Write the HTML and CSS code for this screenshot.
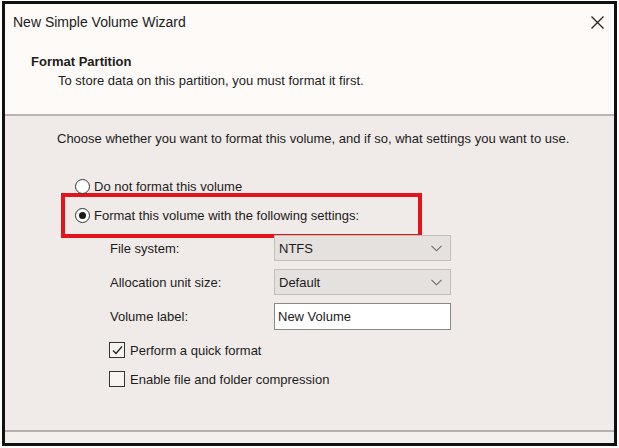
FILE: index.html
```html
<!DOCTYPE html>
<html lang="en">
<head>
  <meta charset="UTF-8">
  <title>New Simple Volume Wizard</title>
  <link rel="stylesheet" href="styles.css">
</head>
<body>
  <div class="window">
    <header class="head">
      <div class="title-row">
        <span class="title">New Simple Volume Wizard</span>
        <svg class="close" width="13" height="13" viewBox="0 0 13 13">
          <path d="M0.5 0.5 L12.5 12.5 M12.5 0.5 L0.5 12.5" stroke="#222" stroke-width="1.3" fill="none"/>
        </svg>
      </div>
      <div class="step">Format Partition</div>
      <div class="step-sub">To store data on this partition, you must format it first.</div>
    </header>

    <main class="body">
      <p class="intro">Choose whether you want to format this volume, and if so, what settings you want to use.</p>

      <div class="radio-row first">
        <span class="radio"></span>
        <span>Do not format this volume</span>
      </div>
      <div class="highlight">
        <div class="radio-row">
          <span class="radio on"></span>
          <span>Format this volume with the following settings:</span>
        </div>
      </div>

      <div class="fields">
        <div class="field">
          <span class="label">File system:</span>
          <div class="combo">
            <span>NTFS</span>
            <svg width="11" height="7" viewBox="0 0 11 7"><path d="M0.5 0.8 L5.5 5.8 L10.5 0.8" stroke="#6d6d6d" stroke-width="1.1" fill="none"/></svg>
          </div>
        </div>
        <div class="field">
          <span class="label">Allocation unit size:</span>
          <div class="combo">
            <span>Default</span>
            <svg width="11" height="7" viewBox="0 0 11 7"><path d="M0.5 0.8 L5.5 5.8 L10.5 0.8" stroke="#6d6d6d" stroke-width="1.1" fill="none"/></svg>
          </div>
        </div>
        <div class="field">
          <span class="label">Volume label:</span>
          <div class="textbox">New Volume</div>
        </div>
      </div>

      <div class="check-row first">
        <span class="check">
          <svg width="13" height="13" viewBox="0 0 13 13"><path d="M2 6.5 L5 9.5 L11 2.5" stroke="#222" stroke-width="1.3" fill="none"/></svg>
        </span>
        <span>Perform a quick format</span>
      </div>
      <div class="check-row">
        <span class="check"></span>
        <span>Enable file and folder compression</span>
      </div>
    </main>

    <footer class="foot"></footer>
  </div>
</body>
</html>
```

FILE: styles.css
```css
body {
  margin: 0;
  background: #fff;
  font-family: 'Liberation Sans', Arial, sans-serif;
  font-size: 13px;
  color: #1c1c1c;
}
.window {
  margin: 1px 2px 0 2px;
  width: 609px;
  height: 439px;
  border: 3px solid #111;
  display: flex;
  flex-direction: column;
  background: #f0ebe8;
}
.head {
  height: 112px;
  background: #fefaf8;
  border-bottom: 2px solid #b8b4b1;
  box-sizing: border-box;
}
.title-row {
  display: flex;
  justify-content: space-between;
  align-items: center;
  padding: 10px 10px 0 8px;
}
.title {
  font-size: 14px;
}
.step {
  font-weight: bold;
  margin: 24px 0 0 26px;
}
.step-sub {
  margin: 4px 0 0 53px;
}
.body {
  flex: 1;
  padding: 0 0 0 52px;
}
.intro {
  margin: 15px 0 0 0;
}
.radio-row {
  display: flex;
  align-items: center;
  gap: 4px;
}
.radio-row.first {
  margin: 33px 0 0 18px;
}
.radio {
  width: 15px;
  height: 15px;
  border: 1px solid #333;
  border-radius: 50%;
  background: #fff;
  box-sizing: border-box;
  position: relative;
}
.radio.on::after {
  content: "";
  position: absolute;
  left: 3px;
  top: 3px;
  width: 7px;
  height: 7px;
  border-radius: 50%;
  background: #1a1a1a;
}
.highlight {
  margin: -1px 0 0 4px;
  border: 4px solid #e2141c;
  padding: 11px 0 0 10px;
  height: 26px;
  width: 343px;
}
.fields {
  margin: -3px 0 0 53px;
}
.field {
  display: flex;
  align-items: center;
  height: 26px;
  margin-bottom: 8px;
}
.label {
  width: 164px;
}
.combo {
  width: 177px;
  height: 26px;
  box-sizing: border-box;
  border: 1px solid #c2beba;
  background: #e5e1de;
  display: flex;
  align-items: center;
  justify-content: space-between;
  padding: 0 8px 0 4px;
}
.textbox {
  width: 177px;
  height: 27px;
  box-sizing: border-box;
  border: 1px solid #8a8785;
  background: #fff;
  padding: 5px 0 0 3px;
}
.check-row {
  display: flex;
  align-items: center;
  gap: 5px;
  margin: 13px 0 0 52px;
}
.check {
  width: 16px;
  height: 16px;
  border: 1px solid #333;
  box-sizing: border-box;
  background: #f7f4f2;
  display: flex;
  align-items: center;
  justify-content: center;
}
.foot {
  height: 11px;
  border-top: 2px solid #b5b1ae;
  background: #f3efec;
}
```
